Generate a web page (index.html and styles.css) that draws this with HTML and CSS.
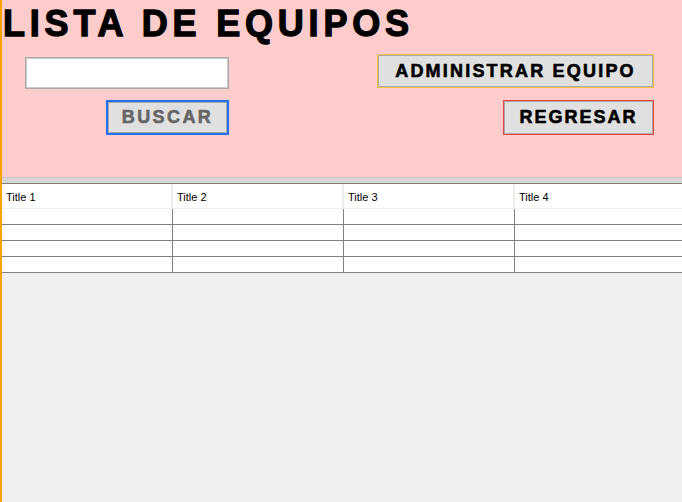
FILE: index.html
```html
<!DOCTYPE html>
<html>
<head>
<meta charset="utf-8">
<link rel="stylesheet" href="styles.css">
</head>
<body>
<div class="frame">
  <div class="panel">
    <h1 class="title">LISTA DE EQUIPOS</h1>
    <div class="controls">
      <div class="col col-left">
        <input class="field" type="text">
        <button class="btn btn-buscar">BUSCAR</button>
      </div>
      <div class="col col-right">
        <button class="btn btn-admin">ADMINISTRAR EQUIPO</button>
        <button class="btn btn-regresar">REGRESAR</button>
      </div>
    </div>
  </div>
  <div class="gap-band"></div>
  <div class="table">
    <div class="th">Title 1</div>
    <div class="th">Title 2</div>
    <div class="th">Title 3</div>
    <div class="th">Title 4</div>
    <div class="td"></div><div class="td"></div><div class="td"></div><div class="td"></div>
    <div class="td"></div><div class="td"></div><div class="td"></div><div class="td"></div>
    <div class="td"></div><div class="td"></div><div class="td"></div><div class="td"></div>
    <div class="td"></div><div class="td"></div><div class="td"></div><div class="td"></div>
  </div>
  <div class="rest"></div>
</div>
</body>
</html>
```

FILE: styles.css
```css
html, body {
  margin: 0;
  padding: 0;
  background: #f0f0f0;
  overflow: hidden;
}
.frame {
  width: 680px;
  height: 502px;
  border-left: 2px solid #ffa200;
  display: flex;
  flex-direction: column;
  background: #f0f0f0;
  font-family: "Liberation Sans", Arial, sans-serif;
}
.panel {
  height: 177px;
  background: #ffcccc;
  display: flex;
  flex-direction: column;
}
.title {
  margin: 0;
  padding: 4px 0 0 1px;
  height: 40px;
  line-height: 40px;
  font-size: 36px;
  font-weight: 700;
  letter-spacing: 4.8px;
  color: #000;
  -webkit-text-stroke: 1.3px #000;
  white-space: nowrap;
}
.controls {
  display: flex;
  justify-content: space-between;
  padding: 0 28px 0 23px;
}
.col {
  display: flex;
  flex-direction: column;
  align-items: flex-end;
}
.col-left {
  padding-top: 13px;
  gap: 11px;
}
.col-right {
  padding-top: 10px;
  gap: 12px;
}
.field {
  box-sizing: border-box;
  width: 204px;
  height: 32px;
  margin: 0;
  border: 1px solid #a9a9a9;
  box-shadow: inset 0 0 0 1px #c8c8c8;
  background: #fff;
  outline: none;
}
.btn {
  box-sizing: border-box;
  margin: 0;
  padding: 0;
  background: #e0e0e0;
  font-family: "Liberation Sans", Arial, sans-serif;
  font-weight: 700;
  font-size: 18px;
  color: #000;
  box-shadow: inset 0 0 0 1px #a8a8a8;
  cursor: pointer;
}
.btn-buscar {
  width: 123px;
  height: 35px;
  border: 2px solid #1f70f5;
  color: #666;
  letter-spacing: 2.4px;
  -webkit-text-stroke: 0.6px #666;
}
.btn-admin {
  width: 277px;
  height: 34px;
  border: 1px solid #f6c346;
  letter-spacing: 2.2px;
  -webkit-text-stroke: 0.6px #000;
}
.btn-regresar {
  width: 151px;
  height: 35px;
  border: 1px solid #e84444;
  letter-spacing: 2px;
  -webkit-text-stroke: 0.6px #000;
}
.gap-band {
  height: 5px;
  background: #d6d6d6;
  border-top: 1px solid #c4c4c4;
}
.table {
  display: grid;
  grid-template-columns: repeat(4, 171px);
  grid-template-rows: 25px repeat(4, 16px);
  border-top: 1px solid #808080;
  background: #fff;
  overflow: hidden;
  width: 680px;
}
.th {
  background: #fff;
  border-right: 2px solid #ececec;
  border-bottom: 1px solid #f0f0f0;
  font-family: "Liberation Sans", Arial, sans-serif;
  font-size: 11px;
  line-height: 22px;
  padding: 2px 0 0 4px;
  color: #000;
}
.td {
  border-right: 1px solid #808080;
  border-bottom: 1px solid #808080;
  background: #fff;
}
.rest {
  flex: 1;
  background: #f0f0f0;
}
```
